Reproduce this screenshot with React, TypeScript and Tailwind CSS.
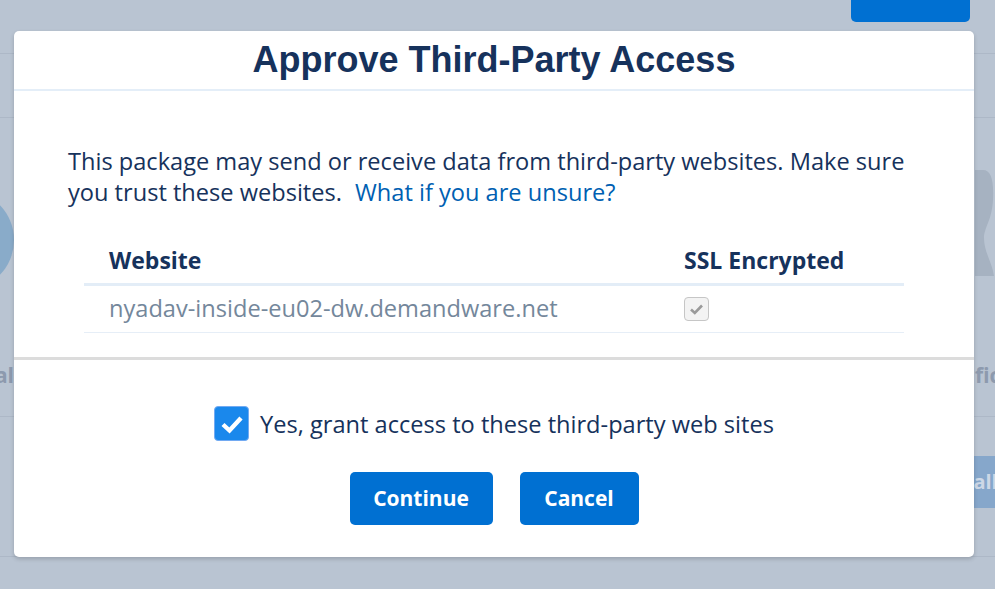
import React from 'react';

const sans = { fontFamily: '"Open Sans", "Noto Sans", sans-serif' };

const App = () => {
  return (
    <div className="relative w-full h-[589px] overflow-hidden bg-[#b9c4d2]" style={sans}>
      {/* Dimmed page behind the dialog */}
      <div className="flex justify-end h-[54px] border-b border-[#adb8c7]">
        <div className="mr-[25px] w-[119px] h-[22px] rounded-b-[5px] bg-[#0070d2]"></div>
      </div>
      <div className="h-[64px] border-b border-[#adb8c7]"></div>
      <div className="flex justify-between h-[299px] border-b border-[#adb8c7]">
        <div className="-ml-[86px] w-[100px] flex flex-col">
          <div className="mt-[72px] w-[100px] h-[100px] rounded-full bg-[#89abc9]"></div>
          <div className="mt-[72px] text-right text-[21px] font-bold text-[#8d9aae] leading-[26px] whitespace-nowrap">Global</div>
        </div>
        <div className="w-[20px] flex flex-col">
          <svg className="mt-[52px]" width="20" height="106" viewBox="0 0 20 106">
            <path d="M0 0 L8 0 C16 0 19 10 18 30 C17 50 9 58 9 68 C9 82 17 92 19 106 L0 106 Z" fill="#a6b2c1" />
          </svg>
          <div className="mt-[86px] text-[21px] font-bold text-[#8d9aae] leading-[26px] whitespace-nowrap">fications</div>
        </div>
      </div>
      <div className="flex justify-end h-[140px] border-b border-[#adb8c7]">
        <div className="mt-[39px] -mr-[35px] w-[120px] h-[52px] rounded-[5px] bg-[#86a7cb] flex items-center pl-[25px] text-[20px] font-bold text-[#cdd8e6]">
          Install
        </div>
      </div>

      {/* Dialog */}
      <div className="absolute left-[14px] top-[31px] w-[960px] h-[526px] bg-white rounded-[5px] shadow-[0_2px_4px_rgba(0,0,0,0.18)] flex flex-col">
        <div className="h-[60px] flex items-center justify-center border-b-2 border-[#e4eef8]">
          <h1
            className="text-[36px] font-bold text-[#16325c] leading-none"
            style={{ fontFamily: '"Liberation Sans", Arial, sans-serif' }}
          >
            Approve Third-Party Access
          </h1>
        </div>

        <div className="px-[54px] pt-[55px]">
          <p className="text-[23.6px] leading-[31px] text-[#16325c]">
            This package may send or receive data from third-party websites. Make sure you trust these websites.{' '}
            <span className="ml-[7px] text-[#005fb2]">What if you are unsure?</span>
          </p>
        </div>

        <div className="mx-[70px] mt-[39px]">
          <div className="flex border-b-[3px] border-[#e3edf7] pb-[10px] text-[23px] leading-[26px] font-bold text-[#16325c]">
            <div className="w-[575px] pl-[25px]">Website</div>
            <div className="pl-[25px]">SSL Encrypted</div>
          </div>
          <div className="flex items-center h-[47px] border-b border-[#e6eef7]">
            <div className="w-[575px] pl-[25px] text-[23.6px] text-[#74879b]">nyadav-inside-eu02-dw.demandware.net</div>
            <div className="pl-[25px]">
              <div className="w-[25px] h-[24px] rounded-[4px] border border-[#c6c6c6] bg-[#f3f3f3] flex items-center justify-center">
                <svg width="15" height="12" viewBox="0 0 15 12">
                  <path d="M2 6.5 L5.8 10 L13 2.5" fill="none" stroke="#9a9a9a" strokeWidth="2.6" />
                </svg>
              </div>
            </div>
          </div>
        </div>

        <div className="mt-[24px] border-t-[3px] border-[#dcdcdc] flex-1 flex flex-col items-center pt-[46px]">
          <div className="flex items-center gap-[11px]">
            <div className="w-[35px] h-[35px] rounded-[4px] bg-[#1a88ec] border border-[#72aaf2] flex items-center justify-center">
              <svg width="24" height="20" viewBox="0 0 24 20">
                <path d="M3 10.5 L9.5 16.5 L21 4" fill="none" stroke="white" strokeWidth="4.4" />
              </svg>
            </div>
            <span className="text-[23.6px] leading-[26px] text-[#16325c]">Yes, grant access to these third-party web sites</span>
          </div>
          <div className="mt-[31px] flex gap-[27px]">
            <button className="w-[143px] h-[53px] rounded-[5px] bg-[#0070d2] text-white text-[21px] font-bold">Continue</button>
            <button className="w-[119px] h-[53px] rounded-[5px] bg-[#0070d2] text-white text-[21px] font-bold">Cancel</button>
          </div>
        </div>
      </div>
    </div>
  );
};

export default App;
